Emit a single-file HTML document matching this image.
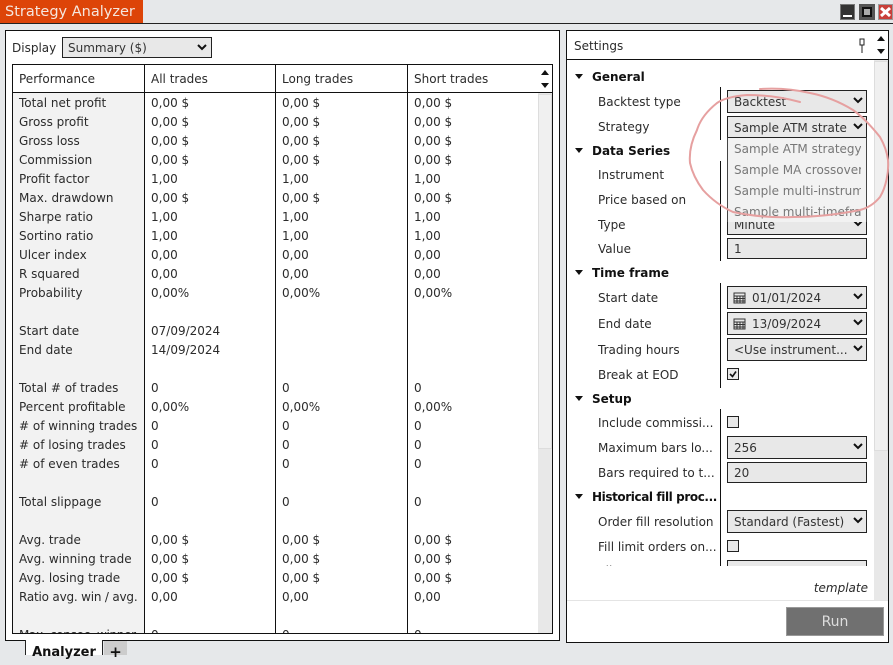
<!DOCTYPE html>
<html><head><meta charset="utf-8"><style>
html,body{margin:0;padding:0}
body{width:893px;height:655px;overflow:hidden;position:relative;background:#e6e8ea;font:12px "DejaVu Sans",sans-serif;color:#2b2b2b}
div,span{box-sizing:border-box}
.a{position:absolute}
.t{position:absolute;white-space:nowrap;line-height:18px;height:18px;margin-top:1px}
.g{font-weight:bold;color:#111;left:592px}
.l{left:598px}
.box{position:absolute;left:727px;width:140px;background:#e8e8e8;border:1px solid #222;line-height:22px;padding-left:6px;white-space:nowrap;overflow:hidden;color:#333}
.box svg{position:absolute;right:2px;top:6px}
.tri{position:absolute;left:575px;width:0;height:0;border-left:4px solid transparent;border-right:4px solid transparent;border-top:5px solid #111}
.div{position:absolute;left:720px;width:1px;background:#111}
.cb{position:absolute;left:727px;width:12px;height:12px;border:1px solid #222;background:#e8e8e8}
.row{height:19px;line-height:21px;position:relative;white-space:nowrap}
.row span{position:absolute;top:0}
.row span:nth-child(1){left:6px}
.row span:nth-child(2){left:138px}
.row span:nth-child(3){left:269px}
.row span:nth-child(4){left:401px}
.dd{position:absolute;left:6px;white-space:nowrap;line-height:23px;color:#777}
</style></head><body>
<div class="a" style="left:0;top:0;width:143px;height:23px;background:#dd4408;color:#f5e6de;font-size:14.500px;line-height:25px;padding-left:5px;white-space:nowrap">Strategy Analyzer</div>
<div class="a" style="left:0;top:23px;width:893px;height:1px;background:#222"></div>
<div class="a" style="left:840px;top:4px;width:15px;height:16px;background:#333;border:1px solid #777"><div class="a" style="left:2px;top:10px;width:9px;height:2px;background:#fff"></div></div>
<div class="a" style="left:859px;top:4px;width:16px;height:16px;background:#555"><div class="a" style="left:3px;top:3px;width:10px;height:10px;border:2px solid #111;background:#aaa"></div></div>
<div class="a" style="left:878px;top:4px;width:15px;height:16px;background:#c8403a;border:1px solid #999"><svg width="13" height="14" style="position:absolute;left:0;top:0"><path d="M2 3L11 11M11 3L2 11" stroke="#fff" stroke-width="3"/></svg></div>

<!-- left panel -->
<div class="a" style="left:5px;top:30px;width:555px;height:611px;background:#fff;border:1px solid #111"></div>
<div class="t" style="left:12px;top:38px">Display</div>
<div class="a" style="left:62px;top:37px;width:150px;height:21px;background:#e8e8e8;border:1px solid #222;line-height:20px;padding-left:5px;color:#333">Summary ($)<svg width="12" height="8" style="position:absolute;right:3px;top:6px"><path d="M2 1L6 5L10 1" fill="none" stroke="#111" stroke-width="2"/></svg></div>
<div class="a" style="left:12px;top:64px;width:541px;height:570px;border:1px solid #111;overflow:hidden;background:#fff">
 <div class="a" style="left:0;top:28px;width:131px;height:542px;background:#f2f2f2"></div>
 <div class="a" style="left:525px;top:28px;width:14px;height:542px;background:#e8e8e8"></div>
 <div class="a" style="left:525px;top:29px;width:14px;height:355px;background:#f0f0f0;border:1px solid #ddd"></div>
 <div class="a" style="left:131px;top:0;width:1px;height:570px;background:#111"></div>
 <div class="a" style="left:262px;top:0;width:1px;height:570px;background:#111"></div>
 <div class="a" style="left:394px;top:0;width:1px;height:570px;background:#111"></div>
 <div class="a" style="left:0;top:27px;width:541px;height:1px;background:#111"></div>
 <div class="a row" style="top:4px;left:0;width:520px"><span>Performance</span><span>All trades</span><span>Long trades</span><span>Short trades</span></div>
 <svg class="a" style="left:526px;top:2px" width="12" height="24"><path d="M2 8L6 3L10 8ZM2 16L10 16L6 21Z" fill="#111"/></svg>
 <div class="a" style="left:0;top:28px;width:525px">
  <div class="row"><span>Total net profit</span><span>0,00 $</span><span>0,00 $</span><span>0,00 $</span></div>
  <div class="row"><span>Gross profit</span><span>0,00 $</span><span>0,00 $</span><span>0,00 $</span></div>
  <div class="row"><span>Gross loss</span><span>0,00 $</span><span>0,00 $</span><span>0,00 $</span></div>
  <div class="row"><span>Commission</span><span>0,00 $</span><span>0,00 $</span><span>0,00 $</span></div>
  <div class="row"><span>Profit factor</span><span>1,00</span><span>1,00</span><span>1,00</span></div>
  <div class="row"><span>Max. drawdown</span><span>0,00 $</span><span>0,00 $</span><span>0,00 $</span></div>
  <div class="row"><span>Sharpe ratio</span><span>1,00</span><span>1,00</span><span>1,00</span></div>
  <div class="row"><span>Sortino ratio</span><span>1,00</span><span>1,00</span><span>1,00</span></div>
  <div class="row"><span>Ulcer index</span><span>0,00</span><span>0,00</span><span>0,00</span></div>
  <div class="row"><span>R squared</span><span>0,00</span><span>0,00</span><span>0,00</span></div>
  <div class="row"><span>Probability</span><span>0,00%</span><span>0,00%</span><span>0,00%</span></div>
  <div class="row"></div>
  <div class="row"><span>Start date</span><span>07/09/2024</span></div>
  <div class="row"><span>End date</span><span>14/09/2024</span></div>
  <div class="row"></div>
  <div class="row"><span>Total # of trades</span><span>0</span><span>0</span><span>0</span></div>
  <div class="row"><span>Percent profitable</span><span>0,00%</span><span>0,00%</span><span>0,00%</span></div>
  <div class="row"><span># of winning trades</span><span>0</span><span>0</span><span>0</span></div>
  <div class="row"><span># of losing trades</span><span>0</span><span>0</span><span>0</span></div>
  <div class="row"><span># of even trades</span><span>0</span><span>0</span><span>0</span></div>
  <div class="row"></div>
  <div class="row"><span>Total slippage</span><span>0</span><span>0</span><span>0</span></div>
  <div class="row"></div>
  <div class="row"><span>Avg. trade</span><span>0,00 $</span><span>0,00 $</span><span>0,00 $</span></div>
  <div class="row"><span>Avg. winning trade</span><span>0,00 $</span><span>0,00 $</span><span>0,00 $</span></div>
  <div class="row"><span>Avg. losing trade</span><span>0,00 $</span><span>0,00 $</span><span>0,00 $</span></div>
  <div class="row"><span style="letter-spacing:-.2px">Ratio avg. win / avg.</span><span>0,00</span><span>0,00</span><span>0,00</span></div>
  <div class="row"></div>
  <div class="row"><span style="letter-spacing:-.3px">Max. consec. winner</span><span>0</span><span>0</span><span>0</span></div>
 </div>
</div>
<div class="a" style="left:25px;top:640px;width:78px;height:15px;background:#fff;border-left:1px solid #222;border-right:1px solid #222;text-align:center;font-weight:bold;font-size:13px;line-height:25px;color:#111">Analyzer</div>
<div class="a" style="left:104px;top:641px;width:23px;height:14px;background:#ccc;text-align:center;font-weight:bold;font-size:15px;line-height:22px;color:#111">+</div>

<!-- right panel -->
<div class="a" style="left:566px;top:30px;width:323px;height:613px;background:#fff;border:1px solid #111"></div>
<div class="a" style="left:567px;top:59px;width:321px;height:1px;background:#111"></div>
<div class="t" style="left:574px;top:36px">Settings</div>
<svg class="a" style="left:857px;top:38px" width="10" height="16"><path d="M3 1H7V7H3ZM5 7V15" fill="none" stroke="#222"/></svg>
<svg class="a" style="left:874px;top:33px" width="14" height="24"><path d="M3 8L7 3L11 8ZM3 16L11 16L7 21Z" fill="#111"/></svg>
<div class="a" style="left:874px;top:60px;width:14px;height:540px;background:#e8e8e8"></div>
<div class="a" style="left:874px;top:61px;width:14px;height:390px;background:#f0f0f0;border:1px solid #ddd"></div>
<div class="a" style="left:567px;top:600px;width:321px;height:1px;background:#e4e4e4"></div>

<div class="tri" style="top:74px"></div><div class="t g" style="top:67px">General</div>
<div class="div" style="top:87px;height:53px"></div>
<div class="t l" style="top:92px">Backtest type</div>
<div class="box" style="top:90px;height:23px">Backtest<svg width="12" height="8"><path d="M2 1L6 5L10 1" fill="none" stroke="#111" stroke-width="2"/></svg></div>
<div class="t l" style="top:117px">Strategy</div>

<div class="tri" style="top:148px"></div><div class="t g" style="top:141px">Data Series</div>
<div class="div" style="top:161px;height:100px"></div>
<div class="t l" style="top:165px">Instrument</div>
<div class="t l" style="top:190px">Price based on</div>
<div class="t l" style="top:215px">Type</div>
<div class="box" style="top:213px;height:22px">Minute<svg width="12" height="8"><path d="M2 1L6 5L10 1" fill="none" stroke="#111" stroke-width="2"/></svg></div>
<div class="t l" style="top:239px">Value</div>
<div class="box" style="top:238px;height:21px;line-height:20px">1</div>

<div class="tri" style="top:270px"></div><div class="t g" style="top:263px">Time frame</div>
<div class="div" style="top:283px;height:105px"></div>
<div class="t l" style="top:288px">Start date</div>
<div class="box" style="top:286px;height:23px;padding-left:24px">01/01/2024<svg width="12" height="8"><path d="M2 1L6 5L10 1" fill="none" stroke="#111" stroke-width="2"/></svg></div>
<svg class="a" style="left:733px;top:292px" width="13" height="12"><path d="M1 1H12V11H1ZM1 4H12M1 6.500H12M1 9H12M4 4V11M7 4V11M10 4V11" fill="none" stroke="#333"/></svg>
<div class="t l" style="top:314px">End date</div>
<div class="box" style="top:312px;height:23px;padding-left:24px">13/09/2024<svg width="12" height="8"><path d="M2 1L6 5L10 1" fill="none" stroke="#111" stroke-width="2"/></svg></div>
<svg class="a" style="left:733px;top:318px" width="13" height="12"><path d="M1 1H12V11H1ZM1 4H12M1 6.500H12M1 9H12M4 4V11M7 4V11M10 4V11" fill="none" stroke="#333"/></svg>
<div class="t l" style="top:340px">Trading hours</div>
<div class="box" style="top:338px;height:23px">&lt;Use instrument...<svg width="12" height="8" style="background:#e8e8e8"><path d="M2 1L6 5L10 1" fill="none" stroke="#111" stroke-width="2"/></svg></div>
<div class="t l" style="top:365px">Break at EOD</div>
<div class="cb" style="top:368px"><svg width="10" height="10" style="position:absolute;left:0;top:0"><path d="M2 5L4.500 7.500L8 2.500" fill="none" stroke="#111" stroke-width="1.600"/></svg></div>

<div class="tri" style="top:396px"></div><div class="t g" style="top:389px">Setup</div>
<div class="div" style="top:409px;height:157px"></div>
<div class="t l" style="top:413px">Include commissi...</div>
<div class="cb" style="top:416px"></div>
<div class="t l" style="top:438px">Maximum bars lo...</div>
<div class="box" style="top:436px;height:23px">256<svg width="12" height="8"><path d="M2 1L6 5L10 1" fill="none" stroke="#111" stroke-width="2"/></svg></div>
<div class="t l" style="top:463px">Bars required to t...</div>
<div class="box" style="top:462px;height:21px;line-height:20px">20</div>

<div class="tri" style="top:494px"></div><div class="t g" style="top:487px;letter-spacing:-.4px">Historical fill proc...</div>
<div class="t l" style="top:512px">Order fill resolution</div>
<div class="box" style="top:510px;height:23px">Standard (Fastest)<svg width="12" height="8" style="background:#e8e8e8"><path d="M2 1L6 5L10 1" fill="none" stroke="#111" stroke-width="2"/></svg></div>
<div class="t l" style="top:537px">Fill limit orders on...</div>
<div class="cb" style="top:540px"></div>
<div class="t l" style="top:561px">Slippage</div>
<div class="box" style="top:560px;height:21px;line-height:20px">0</div>
<div class="a" style="left:567px;top:566px;width:307px;height:34px;background:#fff"></div>
<div class="t" style="left:812px;top:578px;font-style:italic;width:56px;text-align:right">template</div>
<div class="a" style="left:786px;top:607px;width:98px;height:29px;background:#707070;border:1px solid #999;color:#ddd;text-align:center;font-size:14px;line-height:28px">Run</div>

<!-- dropdown -->
<div class="box" style="top:116px;height:22px;z-index:3;background:#e8e8e8">Sample ATM strate<svg width="12" height="8" style="background:#e8e8e8"><path d="M2 1L6 5L10 1" fill="none" stroke="#111" stroke-width="2"/></svg></div>
<div class="a" style="left:727px;top:137px;width:140px;height:85px;background:#f2f2f2;border-left:1px solid #444;border-right:1px solid #444;border-top:1px solid #222;z-index:3">
 <div class="a" style="left:0;top:0;width:133px;height:84px;overflow:hidden">
  <div class="dd" style="top:0">Sample ATM strategy</div>
  <div class="dd" style="top:21px">Sample MA crossover</div>
  <div class="dd" style="top:42px">Sample multi-instrument</div>
  <div class="dd" style="top:63px">Sample multi-timeframe</div>
 </div>
</div>
<svg class="a" style="left:0;top:0;z-index:4" width="893" height="655"><path d="M800 102C785 98 765 95 747 95C735 96 724 98 717 103C707 111 700 120 697 130C691 142 689 152 690 163C692 172 697 182 703 190C712 200 722 207 733 212C752 216 772 218 793 217C815 217 840 214 860 210C868 208 875 203 880 197C886 187 889 172 888 160C887 152 884 144 880 137C872 127 863 117 853 110C840 102 825 96 810 93C793 89 775 88 760 89" fill="none" stroke="#e6a0a0" stroke-width="2" stroke-linecap="round"/></svg>
</body></html>
